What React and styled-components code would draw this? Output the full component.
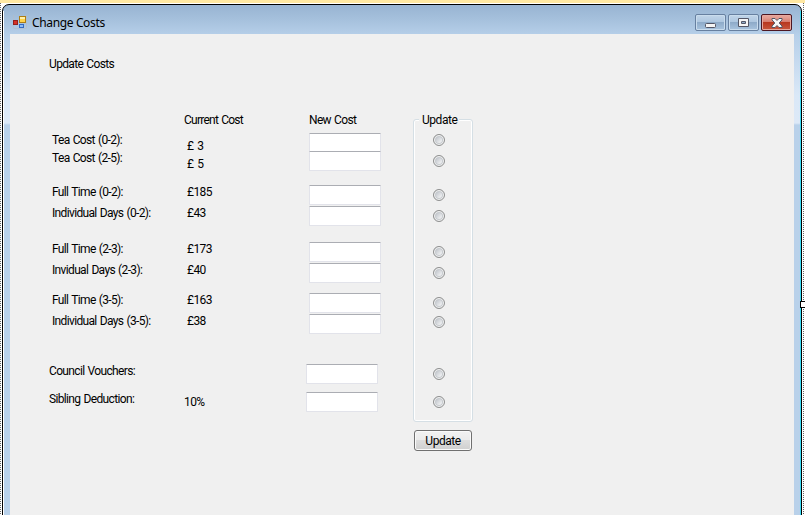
import React from 'react';
import styled, { createGlobalStyle } from 'styled-components';

const GlobalStyle = createGlobalStyle`
  * { box-sizing: border-box; }
  body { margin: 0; overflow: hidden; background: #fff; }
`;

const Designer = styled.div`
  position: relative;
  width: 805px;
  height: 515px;
  padding: 4px 3px 0 2px;
  overflow: hidden;
  font-family: Roboto, "Liberation Sans", sans-serif;
  font-size: 12px;
  color: #000;
  background:
    linear-gradient(#ffe8a2, #ffe8a2) 0 0 / 805px 3px no-repeat,
    repeating-linear-gradient(#666 0 1px, #fff 1px 2px) 0 3px / 1px 512px no-repeat,
    repeating-linear-gradient(#666 0 1px, #fff 1px 2px) 803px 3px / 1px 512px no-repeat,
    #fff;
`;

const Handle = styled.span`
  position: absolute;
  right: 0;
  top: 301px;
  width: 5px;
  height: 7px;
  border: 1px solid #000;
  border-right: 0;
  background: #fff;
`;

const Window = styled.main`
  width: 800px;
  height: 520px;
  border: 1px solid #000;
  border-radius: 7px 7px 0 0;
  padding: 0 7px;
  background:
    linear-gradient(#3edcf5, #3edcf5) 797px 6px / 1px 514px no-repeat,
    linear-gradient(#fff, #fff) 0 6px / 1px 514px no-repeat,
    linear-gradient(#98b4d2 0, #a5c0dc 14px, #b6cfe9 30px, #dae8f7 90px, #dde9f7 118px, #b9d1ea 120px);
`;

const TitleBar = styled.header`
  display: flex;
  align-items: flex-start;
  height: 29px;
  margin-right: -5px;
  padding: 9px 7px 0 3px;
`;

const Title = styled.h1`
  flex: 1;
  margin: 1px 0 0 5px;
  font: 12px/16px "Noto Sans", sans-serif;
  letter-spacing: -0.36px;
`;

const Caption = styled.span`
  display: grid;
  place-items: center;
  width: 31px;
  height: 17px;
  margin-left: 2px;
  border: 1px solid ${p => (p.$close ? '#4d1722' : '#6780a0')};
  border-radius: 2px;
  box-shadow: inset 0 0 0 1px ${p => (p.$close ? '#e7a99f' : '#c9dced')};
  background: ${p => p.$close
    ? 'linear-gradient(#e5a095 0 15%, #d5796a 48%, #b83820 50%, #c8573e)'
    : 'linear-gradient(#bdd2e7 0 10%, #adc6df 48%, #8eabc9 50%, #a9c4df)'};
`;

const Client = styled.section`
  display: flex;
  height: 482px;
  width: 784px;
  padding-left: 39px;
  background: #f0f0f0;
`;

const Column = styled.div`
  display: flex;
  flex-direction: column;
  width: ${p => p.$width}px;
`;

const Label = styled.span`
  flex: none;
  height: 14px;
  line-height: 14px;
  margin-top: ${p => p.$gap}px;
  margin-left: ${p => p.$indent || 0}px;
  letter-spacing: ${p => p.$track ?? -0.65}px;
  word-spacing: 0.8px;
  white-space: pre;
`;

const Field = styled.input`
  flex: none;
  width: 72px;
  height: 20px;
  margin: ${p => p.$gap}px 0 0 ${p => p.$indent || 0}px;
  padding: 0 3px;
  border: 1px solid #e2e3ea;
  border-top-color: #abadb3;
  border-radius: 1px;
  outline: 0;
  background: #fff;
  font: inherit;
`;

const Group = styled.fieldset`
  display: flex;
  flex-direction: column;
  align-items: center;
  position: relative;
  width: 60px;
  height: 303px;
  margin: 85px 0 0 -1px;
  padding: 0;
  border: 1px solid #d5dfe5;
  border-radius: 3px;
  box-shadow: inset 0 0 0 1px #fff;
`;

const Legend = styled.span`
  position: absolute;
  left: 5px;
  top: -7px;
  padding: 0 2px 0 3px;
  line-height: 14px;
  letter-spacing: -0.45px;
  background: #f0f0f0;
`;

const Radio = styled.input`
  appearance: none;
  flex: none;
  width: 12px;
  height: 12px;
  margin: ${p => p.$gap}px 8px 0 0;
  border: 1px solid #8e8f8f;
  border-radius: 50%;
  box-shadow: inset 0 0 0 1px #f4f4f4, inset 0 0 0 2px #c6cace;
  background: linear-gradient(135deg, #c4c8ce 25%, #f3f4f5 75%);
`;

const Button = styled.button`
  width: 58px;
  height: 21px;
  margin: 8px 0 0;
  padding: 1px 0 0;
  border: 1px solid #707070;
  border-radius: 3px;
  box-shadow: inset 0 0 0 1px #fafafa;
  background: linear-gradient(#f2f2f2 0, #ebebeb 50%, #dddddd 50%, #cfcfcf);
  color: #000;
  font: inherit;
  line-height: 18px;
  letter-spacing: -0.45px;
`;

const labels = [
  ['Update Costs', 23, 0],
  ['Tea Cost (0-2):', 62, 3],
  ['Tea Cost (2-5):', 4, 3],
  ['Full Time (0-2):', 20, 3],
  ['Individual Days (0-2):', 7, 3],
  ['Full Time (2-3):', 22, 3],
  ['Invidual Days (2-3):', 7, 3],
  ['Full Time (3-5):', 16, 3],
  ['Individual Days (3-5):', 7, 3],
  ['Council Vouchers:', 36, 0],
  ['Sibling Deduction:', 14, 0],
];

const values = [
  ['Current Cost', 79, 0, -0.75],
  ['£ 3', 12, 3, -0.3],
  ['£ 5', 4, 3, -0.3],
  ['£185', 14, 3, -0.6],
  ['£43', 7, 3, -0.6],
  ['£173', 22, 3, -0.6],
  ['£40', 7, 3, -0.6],
  ['£163', 16, 3, -0.6],
  ['£38', 7, 3, -0.6],
  ['10%', 67, 0, -0.6],
];

const fields = [[6, 3], [-2, 3], [14, 3], [1, 3], [16, 3], [1, 3], [10, 3], [1, 3], [30, 0], [8, 0]];
const radios = [14, 9, 22, 9, 24, 9, 18, 7, 40, 16];

function AppIcon() {
  return (
    <svg width="14" height="15" viewBox="0 0 14 15">
      <path d="M.5 1v13M13.5 1v13M.5 14.5h13" stroke="#b4bcc4" strokeOpacity=".6" />
      <rect x=".5" y="6.5" width="4" height="4" fill="#d53125" stroke="#931f1b" />
      <rect x="6.5" y="2.5" width="6" height="6" fill="#ffd34a" stroke="#ad7d14" />
      <path d="M7 3h5v2H7z" fill="#fff0a8" />
      <rect x="6.5" y="10.5" width="4" height="3" fill="#8bbcf8" stroke="#356bc1" />
    </svg>
  );
}

export default function App() {
  return (
    <>
      <GlobalStyle />
      <Designer>
        <Window>
          <TitleBar>
            <AppIcon />
            <Title>Change Costs</Title>
            <Caption>
              <svg width="12" height="12" viewBox="0 0 12 12">
                <rect x=".5" y="6.5" width="10" height="4" rx="1" fill="#f5f5f5" stroke="#535666" />
              </svg>
            </Caption>
            <Caption>
              <svg width="12" height="12" viewBox="0 0 12 12">
                <path d="M.5 1.5h10v8H.5z M3.5 4.5h4v2h-4z" fill="#f5f5f5" fillRule="evenodd" stroke="#535666" />
              </svg>
            </Caption>
            <Caption $close>
              <svg width="12" height="10" viewBox="0 0 12 10">
                <path d="M1 .5h3l2 2 2-2h3v1.4L8.2 5 11 8.1v1.4H8l-2-2-2 2H1V8.1L3.8 5 1 1.9z" fill="#f7f7f7" stroke="#535666" />
              </svg>
            </Caption>
          </TitleBar>
          <Client>
            <Column $width={135}>
              {labels.map(([text, gap, indent, track]) => (
                <Label key={text} $gap={gap} $indent={indent} $track={track}>{text}</Label>
              ))}
            </Column>
            <Column $width={122}>
              {values.map(([text, gap, indent, track]) => (
                <Label key={text} $gap={gap} $indent={indent} $track={track}>{text}</Label>
              ))}
            </Column>
            <Column $width={108}>
              <Label $gap={79} $indent={3}>New Cost</Label>
              {fields.map(([gap, indent], i) => (
                <Field key={i} $gap={gap} $indent={indent} />
              ))}
            </Column>
            <Column $width={60}>
              <Group>
                <Legend>Update</Legend>
                {radios.map((gap, i) => (
                  <Radio key={i} type="radio" name="cost" $gap={gap} />
                ))}
              </Group>
              <Button>Update</Button>
            </Column>
          </Client>
        </Window>
        <Handle />
      </Designer>
    </>
  );
}
